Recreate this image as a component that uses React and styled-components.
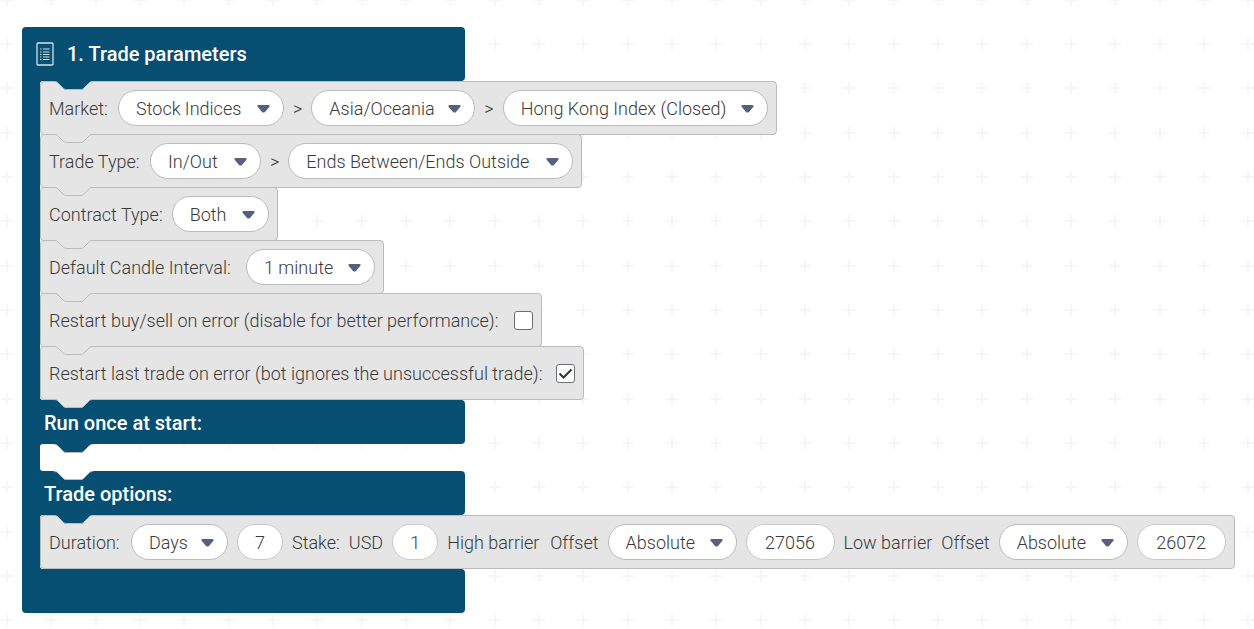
import React from 'react';
import styled, { createGlobalStyle } from 'styled-components';

const blue = '#064e72';
const grey = '#e5e5e5';
const line = '#b9bbbc';

const GlobalStyle = createGlobalStyle`
  * {
    box-sizing: border-box;
  }
  body {
    margin: 0;
    background: #fff;
    color: #3a3a3a;
    font-family: Roboto, 'Liberation Sans', sans-serif;
    font-size: 18px;
    font-weight: 300;
  }
`;

const Workspace = styled.main`
  position: relative;
  min-height: 100vh;
  padding: 27px 20px 16px 22px;
  overflow: hidden;
`;

const GridSvg = styled.svg`
  position: absolute;
  inset: 0;
  width: 100%;
  height: 100%;
`;

const Block = styled.section`
  position: relative;
  width: max-content;
`;

const Bar = styled.div`
  position: relative;
  z-index: 1;
  display: flex;
  align-items: center;
  gap: 13px;
  width: 443px;
  height: ${(props) => (props.$head ? 54 : 44)}px;
  padding-top: ${(props) => (props.$head ? 0 : 1)}px;
  padding-left: ${(props) => (props.$head ? 14 : 22)}px;
  background: ${blue};
  border-radius: ${(props) => (props.$head ? '4px 4px 4px 0' : props.$foot ? '0 4px 4px 4px' : '0 4px 4px 0')};
  color: #fff;
`;

const Title = styled.h1`
  margin: 0;
  font-size: 20px;
  font-weight: 500;
  line-height: 24px;
`;

const Stack = styled.div`
  position: relative;
  min-height: 27px;
  border-left: 18px solid ${blue};
  background:
    radial-gradient(circle at 100% 0, transparent 4px, ${blue} 5px) 0 100% / 4px 4px no-repeat,
    radial-gradient(circle at 100% 100%, transparent 4px, ${blue} 5px) 0 0 / 4px 4px no-repeat;
`;

const Row = styled.div`
  position: relative;
  display: flex;
  align-items: center;
  gap: 9px;
  width: max-content;
  height: 54px;
  padding: 0 8px;
  background: ${grey};
  border: 1px solid ${line};
  border-radius: 4px;

  & + & {
    margin-top: -1px;
  }
`;

const TabSvg = styled.svg`
  position: absolute;
  z-index: 2;
  top: ${(props) => (props.$inRow ? 'calc(100% - 0px)' : '100%')};
  left: ${(props) => (props.$inRow ? 12 : props.$left)}px;
  width: 42px;
  height: 11px;
`;

const Label = styled.label`
  min-width: ${(props) => props.$width || 0}px;
  white-space: nowrap;
`;

const Pick = styled.span`
  position: relative;
  display: flex;
  width: ${(props) => props.$width}px;
`;

const Select = styled.select`
  width: 100%;
  height: 36px;
  padding: 0 34px 0 17px;
  appearance: none;
  background: #fff;
  border: 1px solid ${line};
  border-radius: 18px;
  color: inherit;
  font: inherit;
`;

const Arrow = styled.svg`
  position: absolute;
  top: 15px;
  right: 14px;
  width: 13px;
  height: 8px;
  pointer-events: none;
`;

const NumberBox = styled.input`
  width: ${(props) => (props.$wide ? 89 : 46)}px;
  height: 36px;
  padding: 0;
  background: #fff;
  border: 1px solid #c8c9ca;
  border-radius: 18px;
  color: inherit;
  font: inherit;
  text-align: center;
`;

const Check = styled.span`
  position: relative;
  display: flex;
`;

const CheckBox = styled.input`
  width: 19px;
  height: 19px;
  margin: 0;
  appearance: none;
  background: #fff;
  border: 1px solid #696e77;
  border-radius: 3px;

  & + svg {
    display: none;
  }
  &:checked + svg {
    display: block;
  }
`;

const Mark = styled.svg`
  position: absolute;
  inset: 0;
  pointer-events: none;
`;

// hangs below its own piece and covers the top border of the next one
function Tab({ fill = grey, left = 31, inRow }) {
  return (
    <TabSvg viewBox="0 0 42 11" $left={left} $inRow={inRow} aria-hidden="true">
      <path d="M0 0H1C3 0 4 1 5 2L10 7C11 8 12 9 14 9H27C29 9 30 8 31 7L36 2C37 1 38 0 40 0Z" fill={fill} />
      <path d="M1 .5C3 .5 4 1 5 2L10 7C11 8 12 8.5 14 8.5H27C29 8.5 30 8 31 7L36 2C37 1 38 .5 40 .5" fill="none" stroke={line} />
    </TabSvg>
  );
}

function Dropdown({ id, label, value, width }) {
  return (
    <Pick $width={width}>
      <Select id={id} aria-label={label} defaultValue={value}>
        <option>{value}</option>
      </Select>
      <Arrow viewBox="0 0 13 8" aria-hidden="true">
        <path d="M1.6 0H11.4Q13.4 .4 12.2 2L8 6.9Q6.5 8.1 5 6.9L.8 2Q-.4 .4 1.6 0Z" fill="#575f80" />
      </Arrow>
    </Pick>
  );
}

function Toggle({ id, checked }) {
  return (
    <Check>
      <CheckBox id={id} type="checkbox" defaultChecked={checked} />
      <Mark viewBox="0 0 19 19" width="19" height="19" aria-hidden="true">
        <path d="M3.5 9.5L7.5 13.5L15.5 5.5" fill="none" stroke="#333" strokeWidth="2" />
      </Mark>
    </Check>
  );
}

function Grid() {
  const steps = [6, 50, 95];
  return (
    <GridSvg aria-hidden="true">
      <defs>
        <pattern id="crosses" x="1" y="38" width="133" height="133" patternUnits="userSpaceOnUse">
          {steps.map((y) =>
            steps.map((x) => (
              <path key={`${x}-${y}`} d={`M${x - 6} ${y}h12M${x} ${y - 6}v12`} stroke="#f4f4f4" strokeWidth="1.5" />
            ))
          )}
        </pattern>
      </defs>
      <rect width="100%" height="100%" fill="url(#crosses)" />
    </GridSvg>
  );
}

function ListIcon() {
  return (
    <svg width="18" height="24" viewBox="0 0 18 24" fill="none" stroke="#d5e1e8" aria-hidden="true">
      <rect x="1" y="1" width="16" height="22" rx="1" strokeWidth="1.3" />
      <path d="M4 7h1.5M4 10h1.5M4 12.5h1.5M4 15h1.5M4 17.5h1.5M7 7h6.5M7 10h6.5M7 12.5h6.5M7 15h6.5M7 17.5h6.5" />
    </svg>
  );
}

export default function App() {
  return (
    <>
      <GlobalStyle />
      <Workspace>
        <Grid />
        <Block>
          <Bar $head>
            <ListIcon />
            <Title>1. Trade parameters</Title>
            <Tab fill={blue} />
          </Bar>
          <Stack>
            <Row>
              <Label htmlFor="market" $width={60}>Market:</Label>
              <Dropdown id="market" value="Stock Indices" width={166} />
              <span>&gt;</span>
              <Dropdown label="Submarket" value="Asia/Oceania" width={164} />
              <span>&gt;</span>
              <Dropdown label="Symbol" value="Hong Kong Index (Closed)" width={265} />
              <Tab inRow />
            </Row>
            <Row>
              <Label htmlFor="trade-type" $width={92}>Trade Type:</Label>
              <Dropdown id="trade-type" value="In/Out" width={111} />
              <span>&gt;</span>
              <Dropdown label="Trade category" value="Ends Between/Ends Outside" width={285} />
              <Tab inRow />
            </Row>
            <Row>
              <Label htmlFor="contract">Contract Type:</Label>
              <Dropdown id="contract" value="Both" width={97} />
              <Tab inRow />
            </Row>
            <Row>
              <Label htmlFor="candle" $width={188}>Default Candle Interval:</Label>
              <Dropdown id="candle" value="1 minute" width={129} />
              <Tab inRow />
            </Row>
            <Row>
              <Label htmlFor="restart-buy" $width={456}>Restart buy/sell on error (disable for better performance):</Label>
              <Toggle id="restart-buy" />
              <Tab inRow />
            </Row>
            <Row>
              <Label htmlFor="restart-trade" $width={498}>Restart last trade on error (bot ignores the unsuccessful trade):</Label>
              <Toggle id="restart-trade" checked />
              <Tab inRow />
            </Row>
          </Stack>
          <Bar>
            <Title as="h2">Run once at start:</Title>
            <Tab fill={blue} />
          </Bar>
          <Stack>
            <Tab fill="#fff" left={13} />
          </Stack>
          <Bar>
            <Title as="h2">Trade options:</Title>
            <Tab fill={blue} />
          </Bar>
          <Stack>
            <Row>
              <Label htmlFor="duration" $width={73}>Duration:</Label>
              <Dropdown id="duration" value="Days" width={97} />
              <NumberBox aria-label="Duration amount" defaultValue="7" />
              <Label htmlFor="stake">Stake:</Label>
              <span>USD</span>
              <NumberBox id="stake" defaultValue="1" />
              <Label htmlFor="high" $width={94}>High barrier</Label>
              <span>Offset</span>
              <Dropdown label="High barrier offset" value="Absolute" width={129} />
              <NumberBox id="high" $wide defaultValue="27056" />
              <Label htmlFor="low">Low barrier</Label>
              <span>Offset</span>
              <Dropdown label="Low barrier offset" value="Absolute" width={129} />
              <NumberBox id="low" $wide defaultValue="26072" />
            </Row>
          </Stack>
          <Bar $foot />
        </Block>
      </Workspace>
    </>
  );
}
